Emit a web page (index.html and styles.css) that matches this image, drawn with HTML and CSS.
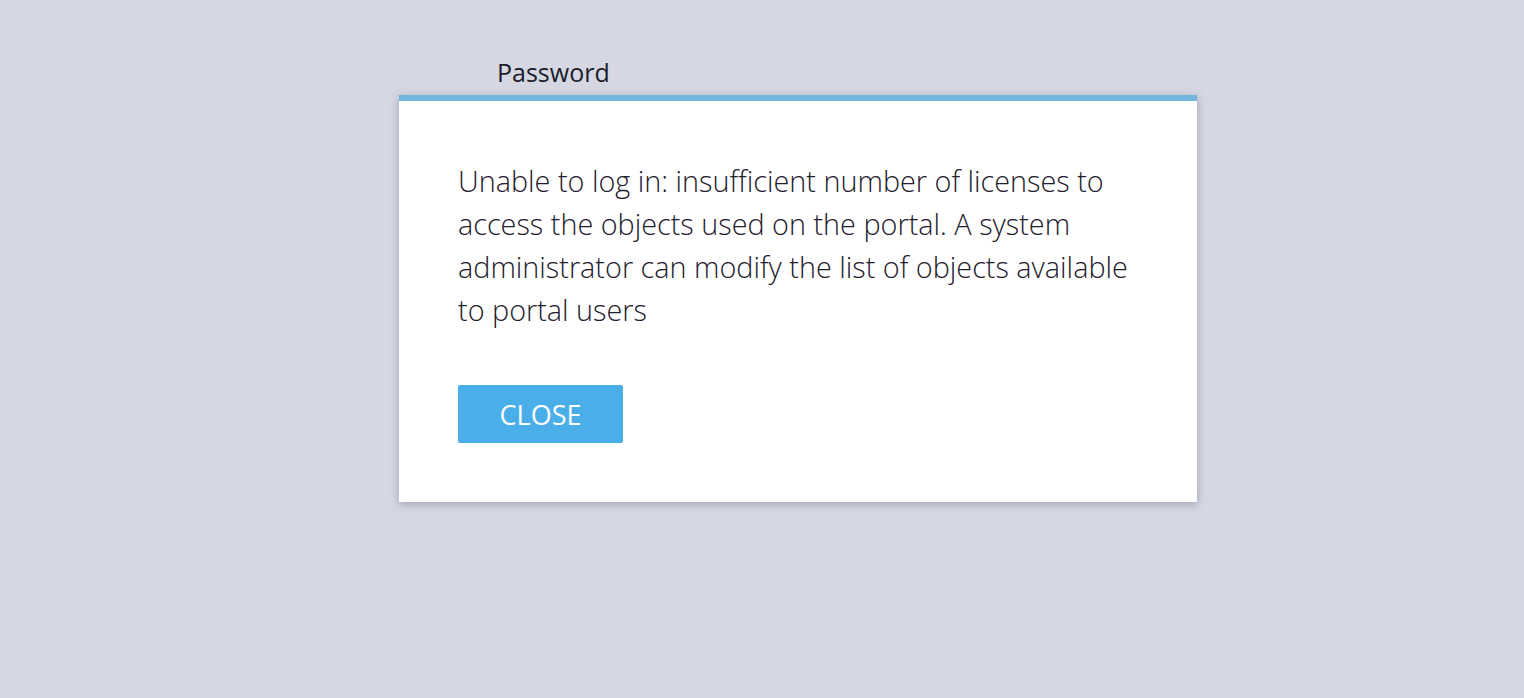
FILE: index.html
```html
<!DOCTYPE html>
<html>
<head>
<meta charset="utf-8">
<link rel="stylesheet" href="styles.css">
</head>
<body>
<div class="page">
  <div class="label">Password</div>
  <div class="dialog">
    <p class="message">Unable to log in: insufficient number of licenses to access the objects used on the portal. A system administrator can modify the list of objects available to portal users</p>
    <button class="btn">CLOSE</button>
  </div>
</div>
</body>
</html>
```
FILE: styles.css
```css
html, body {
  margin: 0;
  padding: 0;
  background: #d5d7e3;
  height: 100%;
}
.page {
  padding-top: 56px;
  padding-left: 399px;
  font-family: "Open Sans", sans-serif;
}
.label {
  padding-left: 98px;
  font-size: 25px;
  line-height: 33px;
  color: #1b1d2b;
  height: 39px;
}
.dialog {
  width: 798px;
  box-sizing: border-box;
  background: #fff;
  border-top: 6px solid #74b6dc;
  padding: 58px 59px 59px;
  box-shadow: 0 2px 8px rgba(60, 64, 90, 0.35);
}
.message {
  margin: 0 0 54px;
  font-weight: 300;
  font-size: 28.8px;
  line-height: 43px;
  color: #1e202c;
}
.btn {
  display: block;
  width: 165px;
  height: 58px;
  border: none;
  border-radius: 2px;
  background: #4aaee8;
  color: #fff;
  font-family: "Open Sans", sans-serif;
  font-size: 27px;
  padding: 0;
}
```
